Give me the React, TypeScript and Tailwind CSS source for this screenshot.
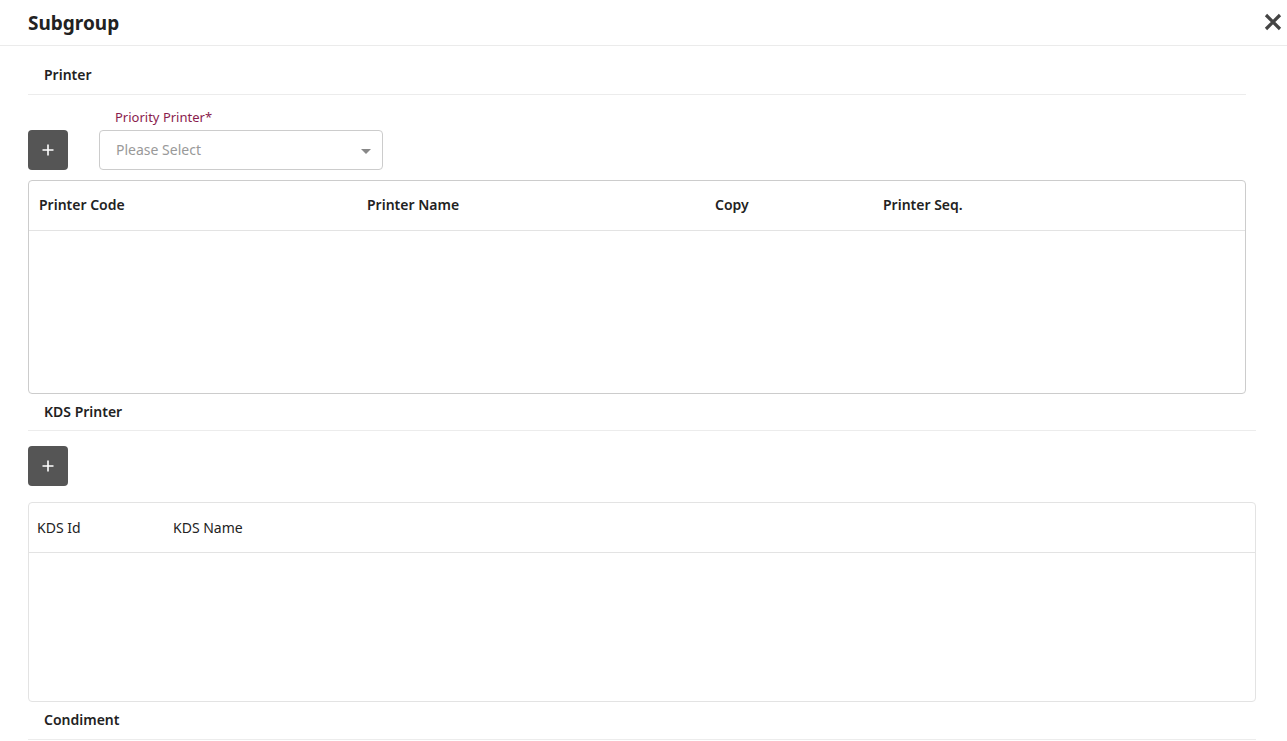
import React from "react";

const FONT = { fontFamily: '"Noto Sans", "Open Sans", sans-serif' };

function PlusButton() {
  return (
    <button className="flex h-[40px] w-[40px] items-center justify-center rounded-[4px] bg-[#555555]">
      <svg width="14" height="14" viewBox="0 0 14 14" fill="none">
        <path d="M7 1.5v11M1.5 7h11" stroke="#ffffff" strokeWidth="1.6" />
      </svg>
    </button>
  );
}

function SectionTitle({ title, className }: { title: string; className: string }) {
  return (
    <div className={`border-b border-[#ececec] pl-[16px] text-[14px] font-semibold leading-5 text-[#222222] ${className}`}>
      {title}
    </div>
  );
}

export default function App() {
  return (
    <div className="min-h-screen bg-white" style={FONT}>
      {/* Header */}
      <div className="flex h-[46px] items-center justify-between border-b border-[#ebebeb] pl-[28px] pr-[4px]">
        <h1 className="text-[19px] font-bold leading-7 text-[#222222]">Subgroup</h1>
        <button className="mb-[2px] flex h-[20px] w-[20px] items-center justify-center">
          <svg width="18" height="18" viewBox="0 0 18 18" fill="none">
            <path d="M2 2l14 14M16 2L2 16" stroke="#444444" strokeWidth="3.2" />
          </svg>
        </button>
      </div>

      <div className="pl-[28px]">
        {/* Printer */}
        <SectionTitle title="Printer" className="w-[1218px] pt-[19px] pb-[9px]" />

        <div className="mt-[13px] flex items-end gap-[31px]">
          <PlusButton />
          <div className="flex flex-col">
            <label className="mb-[4px] pl-[16px] text-[13px] leading-[18px] text-[#8a1c4e]">Priority Printer*</label>
            <div className="relative flex h-[40px] w-[284px] items-center rounded-[4px] border border-[#cccccc] pb-[2px] pl-[16px] text-[14px] text-[#999999]">
              Please Select
              <span className="absolute right-[11px] top-[18px] h-0 w-0 border-x-[5px] border-t-[5px] border-x-transparent border-t-[#888888]" />
            </div>
          </div>
        </div>

        <div className="mt-[10px] h-[214px] w-[1218px] rounded-[4px] border border-[#cccccc]">
          <div className="grid h-[50px] grid-cols-[328px_348px_168px_1fr] items-center border-b border-[#e3e3e3] pb-[2px] pl-[10px] text-[14px] font-semibold text-[#222222]">
            <span>Printer Code</span>
            <span>Printer Name</span>
            <span>Copy</span>
            <span>Printer Seq.</span>
          </div>
        </div>

        {/* KDS Printer */}
        <SectionTitle title="KDS Printer" className="w-[1228px] pt-[8px] pb-[8px]" />

        <div className="mt-[15px]">
          <PlusButton />
        </div>

        <div className="mt-[16px] h-[200px] w-[1228px] rounded-[4px] border border-[#e3e3e3]">
          <div className="grid h-[50px] grid-cols-[136px_1fr] items-center border-b border-[#e3e3e3] pl-[8px] text-[14px] text-[#222222]">
            <span>KDS Id</span>
            <span>KDS Name</span>
          </div>
        </div>

        {/* Condiment */}
        <SectionTitle title="Condiment" className="w-[1228px] pt-[8px] pb-[9px]" />
      </div>
    </div>
  );
}
